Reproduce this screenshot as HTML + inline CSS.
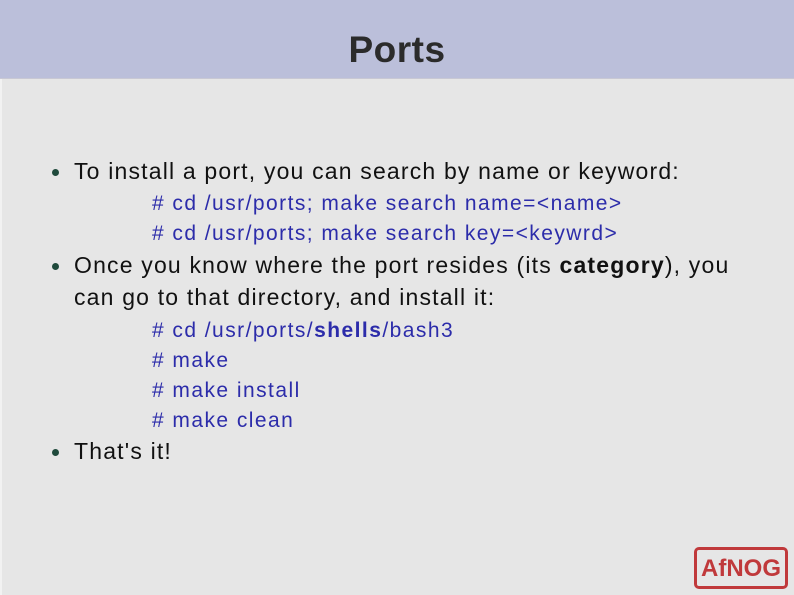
<!DOCTYPE html>
<html><head><meta charset="utf-8"><style>
body{margin:0;width:794px;height:595px;overflow:hidden;background:#e6e6e6;font-family:"Liberation Sans",sans-serif;position:relative}
.hd{position:absolute;left:0;top:0;width:794px;height:78px;background:#bbbfda;border-bottom:1px solid #c8c8d4}
.hd h1{margin:0;position:absolute;top:29px;width:794px;text-align:center;font-size:37px;font-weight:bold;color:#2b2b2b;letter-spacing:0.5px}
.edge{position:absolute;left:0;top:79px;width:2px;height:516px;background:#f2f2f2}
.t{position:absolute;left:74px;font-size:23px;color:#111;white-space:nowrap;letter-spacing:1.18px}
.c{position:absolute;left:152px;font-size:21px;color:#2c2caa;white-space:nowrap;letter-spacing:1.45px}
.d{position:absolute;left:52px;width:7px;height:7px;border-radius:50%;background:#1f4a3c}
.logo{position:absolute;left:694px;top:547px;width:94px;height:42px;border:3px solid #c0393b;border-radius:5px;box-sizing:border-box;color:#c0393b;font-weight:bold;font-size:24px;text-align:center;line-height:37px;letter-spacing:0px}
</style></head><body>
<div class="hd"><h1>Ports</h1></div>
<div class="edge"></div>
<div class="d" style="top:169px"></div>
<div class="t" style="top:158px">To install a port, you can search by name or keyword:</div>
<div class="c" style="top:192px"># cd /usr/ports; make search name=&lt;name&gt;</div>
<div class="c" style="top:222px"># cd /usr/ports; make search key=&lt;keywrd&gt;</div>
<div class="d" style="top:263px"></div>
<div class="t" style="top:252px">Once you know where the port resides (its <b>category</b>), you</div>
<div class="t" style="top:284px">can go to that directory, and install it:</div>
<div class="c" style="top:319px"># cd /usr/ports/<b>shells</b>/bash3</div>
<div class="c" style="top:349px"># make</div>
<div class="c" style="top:379px"># make install</div>
<div class="c" style="top:409px"># make clean</div>
<div class="d" style="top:449px"></div>
<div class="t" style="top:438px">That's it!</div>
<div class="logo">AfNOG</div>
</body></html>
